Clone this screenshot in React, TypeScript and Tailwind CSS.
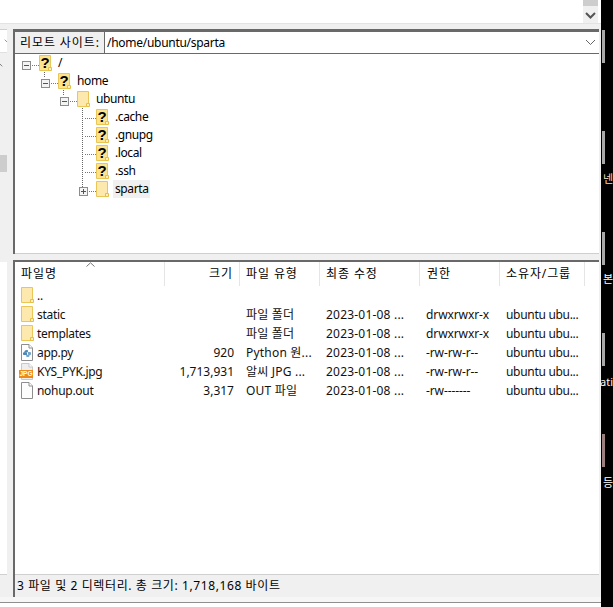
import React from "react";

const font = { fontFamily: '"Noto Sans", "Noto Sans CJK KR", sans-serif' };

function Folder({ q = false }: { q?: boolean }) {
  return (
    <svg width="14" height="17" viewBox="0 0 14 17" className="shrink-0 block">
      <path d="M0.5 0.5H11.5V15.5H0.5Z" fill={q ? "#fce38c" : "#fde9ae"} stroke="#e9c656" />
      <path d="M9.5 15.5V12.5H12.5V15.5Z" fill="#fdf0c4" stroke="#e8bf45" />
      {q && (
        <text x="6" y="13" textAnchor="middle" fontSize="15" fontWeight="700" fill="#000" fontFamily="Liberation Sans, sans-serif">
          ?
        </text>
      )}
    </svg>
  );
}

function Doc({ kind }: { kind: "py" | "jpg" | "txt" }) {
  const line = kind === "jpg" ? "#c8c8c8" : "#8e8e8e";
  return (
    <svg width="16" height="17" viewBox="0 0 16 17" className="shrink-0 block">
      <path d="M2.5 0.5H10L13.5 4V16.5H2.5Z" fill={kind === "jpg" ? "#eeeeee" : "#fdfdfd"} stroke={line} />
      <path d="M10 0.5V4H13.5" fill="#fff" stroke={line} />
      {kind === "py" && (
        <g>
          <path d="M8 6C5.8 6 5.4 7 5.4 8.2H4.8C4.2 8.2 4 9 4 9.7C4 10.4 4.3 11 5 11H8V8.6H6.2C6.8 8 8.5 8.3 8.9 8.3V6.4C8.9 6.1 8.5 6 8 6Z" fill="#4a86b8" />
          <path d="M8.2 13C10.2 13 10.6 12 10.6 10.9H11.2C11.8 10.9 12 10.2 12 9.4C12 8.7 11.7 8 11 8H9V10.4H9.8C9.2 11 7.6 10.8 7.2 10.8V12.6C7.2 12.9 7.7 13 8.2 13Z" fill="#6fa3c9" />
        </g>
      )}
      {kind === "jpg" && (
        <g>
          <rect x="0" y="7" width="14" height="8" fill="#ee8a16" />
          <text x="7" y="13.4" textAnchor="middle" fontSize="6.5" fontWeight="700" fill="#fff" fontFamily="Liberation Sans, sans-serif">
            JPG
          </text>
        </g>
      )}
    </svg>
  );
}

function Box({ minus }: { minus: boolean }) {
  return (
    <div className="w-[9px] h-[9px] border border-[#8c8c8c] bg-[#f4f4f4] flex items-center justify-center relative shrink-0">
      <div className="w-[5px] h-px bg-[#3a53a4]" />
      {!minus && <div className="absolute w-px h-[5px] bg-[#3a53a4]" />}
    </div>
  );
}

const treeRows = [
  { name: "/", pad: "pl-[7px]", box: "minus", q: true },
  { name: "home", pad: "pl-[26px]", box: "minus", q: true },
  { name: "ubuntu", pad: "pl-[45px]", box: "minus", q: false },
  { name: ".cache", pad: "pl-[64px]", box: "none", q: true },
  { name: ".gnupg", pad: "pl-[64px]", box: "none", q: true },
  { name: ".local", pad: "pl-[64px]", box: "none", q: true },
  { name: ".ssh", pad: "pl-[64px]", box: "none", q: true },
  { name: "sparta", pad: "pl-[64px]", box: "plus", q: false },
];

function TreeRow({ r }: { r: (typeof treeRows)[number] }) {
  return (
    <div className={`h-[18px] flex items-center ${r.pad}`}>
      {r.box === "none" ? (
        <div className="w-[17px] shrink-0 flex justify-end">
          <div className="w-[11px] h-px mt-[3px] border-t border-dotted border-[#777]" />
        </div>
      ) : (
        <div className="w-[17px] shrink-0 flex items-center mt-[4px]">
          <Box minus={r.box === "minus"} />
          <div className="w-[7px] ml-[1px] border-t border-dotted border-[#777]" />
        </div>
      )}
      <div className="mt-[1px]">
        <Folder q={r.q} />
      </div>
      <span className={`ml-[3px] px-[2px] h-[18px] leading-[17px] text-[12px] tracking-[-0.4px] text-black ${r.name === "sparta" ? "bg-[#f0f0f0]" : ""}`}>
        {r.name}
      </span>
    </div>
  );
}

const files = [
  { name: "..", icon: "folder", size: "", type: "", date: "", perm: "", owner: "" },
  { name: "static", icon: "folder", size: "", type: "파일 폴더", date: "2023-01-08 ...", perm: "drwxrwxr-x", owner: "ubuntu ubu..." },
  { name: "templates", icon: "folder", size: "", type: "파일 폴더", date: "2023-01-08 ...", perm: "drwxrwxr-x", owner: "ubuntu ubu..." },
  { name: "app.py", icon: "py", size: "920", type: "Python 원...", date: "2023-01-08 ...", perm: "-rw-rw-r--", owner: "ubuntu ubu..." },
  { name: "KYS_PYK.jpg", icon: "jpg", size: "1,713,931", type: "알씨 JPG ...", date: "2023-01-08 ...", perm: "-rw-rw-r--", owner: "ubuntu ubu..." },
  { name: "nohup.out", icon: "txt", size: "3,317", type: "OUT 파일", date: "2023-01-08 ...", perm: "-rw-------", owner: "ubuntu ubu..." },
];

function Header() {
  const cell = "h-[24px] border-r border-[#e5e5e5] flex items-center shrink-0 text-[12px] tracking-[0.9px] text-black";
  return (
    <div className="flex h-[24px] relative">
      <div className={`${cell} w-[150px] pl-[6px]`}>파일명</div>
      <div className={`${cell} w-[75px] justify-end pr-[6px]`}>크기</div>
      <div className={`${cell} w-[80px] pl-[6px]`}>파일 유형</div>
      <div className={`${cell} w-[100px] pl-[6px]`}>최종 수정</div>
      <div className={`${cell} w-[80px] pl-[7px]`}>권한</div>
      <div className={`${cell} w-[85px] pl-[6px]`}>소유자/그룹</div>
      <svg width="9" height="5" viewBox="0 0 9 5" className="absolute left-[71px] top-0">
        <path d="M0.5 4.5L4.5 0.8L8.5 4.5" fill="none" stroke="#777" />
      </svg>
    </div>
  );
}

function FileRow({ f }: { f: (typeof files)[number] }) {
  return (
    <div className="flex h-[19px] items-center text-[12px] text-[#111] whitespace-nowrap">
      <div className="w-[149px] shrink-0 flex items-center pl-[5px]">
        <div className="w-[17px] shrink-0 flex justify-start">
          {f.icon === "folder" ? (
            <div className="ml-[1px]">
              <Folder />
            </div>
          ) : (
            <div className="-ml-[1px]">
              <Doc kind={f.icon as "py" | "jpg" | "txt"} />
            </div>
          )}
        </div>
        <span className="leading-[19px] tracking-[-0.3px]">{f.name}</span>
      </div>
      <div className="w-[70px] shrink-0 text-right">{f.size}</div>
      <div className="w-[92px] shrink-0 pl-[12px] overflow-hidden tracking-[0.2px]">{f.type}</div>
      <div className="w-[100px] shrink-0 tracking-[0.2px]">{f.date}</div>
      <div className="w-[80px] shrink-0 tracking-[-0.1px]">{f.perm}</div>
      <div className="shrink-0 tracking-[-0.3px]">{f.owner}</div>
    </div>
  );
}

function Chevron({ className, w = 11, stroke = "#555", sw = 1 }: { className?: string; w?: number; stroke?: string; sw?: number }) {
  return (
    <svg width={w} height="7" viewBox="0 0 11 7" className={className}>
      <path d="M1 1L5.5 5.5L10 1" fill="none" stroke={stroke} strokeWidth={sw} />
    </svg>
  );
}

function Strip() {
  return (
    <div className="flex-1 bg-black overflow-hidden flex flex-col pt-[30px] text-[11px] leading-[13px] text-white whitespace-nowrap">
      <div className="h-[33px] w-[3px] ml-[1px] bg-[#a9a9a9] shrink-0" />
      <div className="h-[33px] w-[3px] ml-[1px] mt-[68px] bg-[#a9a9a9] shrink-0" />
      <div className="h-[13px] mt-[8px] ml-[2px] shrink-0 text-[#f5deb3]">넨</div>
      <div className="h-[33px] w-[3px] ml-[1px] mt-[47px] bg-[#a9a9a9] shrink-0" />
      <div className="h-[13px] mt-[7px] ml-[2px] shrink-0">본</div>
      <div className="h-[33px] w-[3px] ml-[1px] mt-[48px] bg-[#a9a9a9] shrink-0" />
      <div className="h-[13px] mt-[9px] -ml-[1px] shrink-0">ati</div>
      <div className="h-[33px] w-[3px] ml-[1px] mt-[46px] bg-[#9c7f7f] shrink-0" />
      <div className="h-[13px] mt-[9px] ml-[2px] shrink-0">등</div>
    </div>
  );
}

export default function App() {
  return (
    <div className="w-[613px] h-[607px] flex overflow-hidden bg-black" style={font}>
      <div className="w-[601px] h-full flex flex-col bg-[#f0f0f0]">
        <div className="h-[23px] bg-white flex justify-end shrink-0">
          <div className="w-[15px] mr-[3px] bg-[#f0f0f0] flex flex-col items-center">
            <div className="w-full h-[6px] bg-[#cdcdcd]" />
            <Chevron className="mt-[6px]" stroke="#555" sw={2} />
          </div>
        </div>
        <div className="h-[6px] shrink-0 border-t border-[#e3e3e3]" />
        <div className="h-[568px] flex shrink-0">
          <div className="w-[7px] shrink-0 flex flex-col">
            <div className="h-[225px] flex flex-col border-t border-[#cfcfcf]">
              <div className="h-[23px] bg-white border-b border-[#e0e0e0] overflow-hidden flex items-center justify-end">
                <Chevron className="shrink-0 -mr-[5px]" stroke="#666" w={8} />
              </div>
              <div className="h-[102px] overflow-hidden flex justify-start">
                <Chevron className="shrink-0 mt-[8px] -ml-[5px] rotate-180" stroke="#555" w={8} />
              </div>
              <div className="h-[17px] bg-[#cdcdcd]" />
            </div>
            <div className="h-[8px]" />
            <div className="flex-1 bg-white" />
            <div className="h-[23px] border-t border-[#d0d0d0]" />
          </div>
          <div className="flex-1 pl-[6px] flex flex-col">
            <div className="h-[225px] shrink-0 flex flex-col border-l-2 border-t-[3px] border-[#696969] mr-[2px]">
              <div className="h-[22px] shrink-0 flex border-b border-[#696969] bg-white">
                <div className="w-[90px] shrink-0 bg-[#f0f0f0] border-r border-[#696969] flex items-center pl-[5px] text-[12px] tracking-[0.9px] text-black">
                  리모트 사이트:
                </div>
                <div className="flex-1 flex items-center pl-[2px] pr-[3px] justify-between text-[12px] text-black">
                  <span className="tracking-[-0.28px]">/home/ubuntu/sparta</span>
                  <Chevron stroke="#666" />
                </div>
              </div>
              <div className="flex-1 bg-white border-b border-[#cfcfcf] relative">
                <div className="pt-0">
                  {treeRows.map((r) => (
                    <TreeRow key={r.name} r={r} />
                  ))}
                </div>
                <div className="absolute left-[29px] top-[18px] h-[5px] border-l border-dotted border-[#666]" />
                <div className="absolute left-[48px] top-[36px] h-[5px] border-l border-dotted border-[#666]" />
                <div className="absolute left-[67px] top-[54px] h-[79px] border-l border-dotted border-[#666]" />
              </div>
            </div>
            <div className="h-[6px] shrink-0" />
            <div className="flex-1 flex flex-col border-l-2 border-t-2 border-[#696969] mr-[2px]">
              <div className="h-[312px] shrink-0 bg-white">
                <Header />
                <div>
                  {files.map((f) => (
                    <FileRow key={f.name} f={f} />
                  ))}
                </div>
              </div>
              <div className="flex-1 border-t border-[#d0d0d0] flex items-center pl-[2px] text-[12px] tracking-[0.6px] text-black">
                3 파일 및 2 디렉터리. 총 크기: 1,718,168 바이트
              </div>
            </div>
          </div>
        </div>
        <div className="h-[5px] shrink-0 bg-[#f6f6f6]" />
        <div className="h-px shrink-0 bg-[#8f8f8f]" />
        <div className="flex-1 bg-white" />
      </div>
      <Strip />
    </div>
  );
}
